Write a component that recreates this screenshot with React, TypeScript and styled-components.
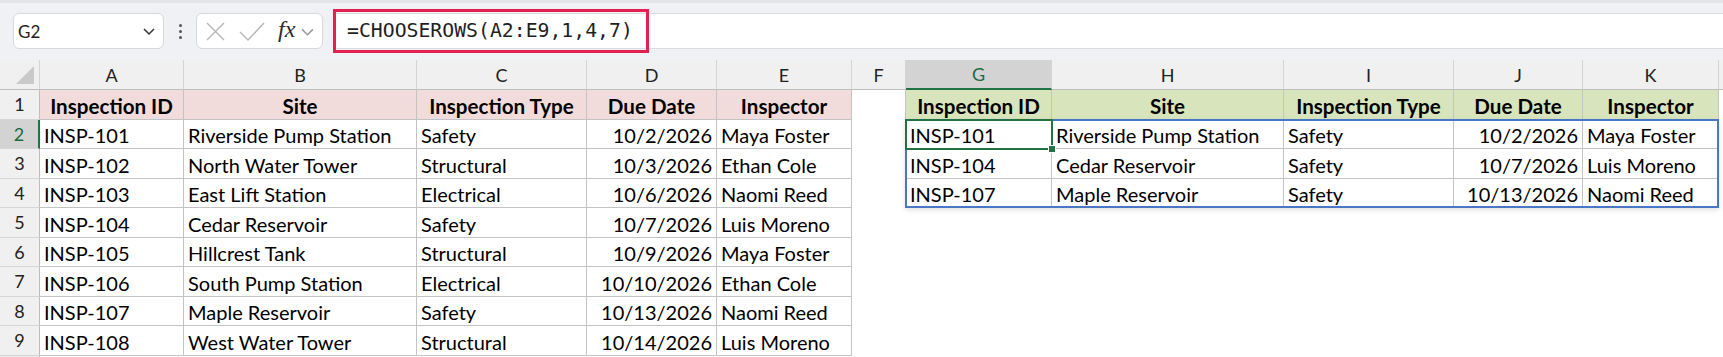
import React from 'react';
import styled, { createGlobalStyle } from 'styled-components';

const GlobalStyle = createGlobalStyle`
  html, body {
    margin: 0;
    padding: 0;
    background: #fff;
  }
  body {
    font-family: Lato, "Liberation Sans", sans-serif;
    overflow: hidden;
  }
`;

// sheet geometry, in px
const COL_WIDTHS = [40, 144, 233, 170, 130, 135, 54, 146, 232, 170, 129, 136];
const LETTERS = ['A', 'B', 'C', 'D', 'E', 'F', 'G', 'H', 'I', 'J', 'K', ''];
const COL_TEMPLATE = COL_WIDTHS.map(w => `${w}px`).join(' ') + ' 1fr';
const ROW_TEMPLATE = '30px repeat(9, 29.5px) 1fr';

const HEADERS = ['Inspection ID', 'Site', 'Inspection Type', 'Due Date', 'Inspector'];

const SOURCE = [
  ['INSP-101', 'Riverside Pump Station', 'Safety', '10/2/2026', 'Maya Foster'],
  ['INSP-102', 'North Water Tower', 'Structural', '10/3/2026', 'Ethan Cole'],
  ['INSP-103', 'East Lift Station', 'Electrical', '10/6/2026', 'Naomi Reed'],
  ['INSP-104', 'Cedar Reservoir', 'Safety', '10/7/2026', 'Luis Moreno'],
  ['INSP-105', 'Hillcrest Tank', 'Structural', '10/9/2026', 'Maya Foster'],
  ['INSP-106', 'South Pump Station', 'Electrical', '10/10/2026', 'Ethan Cole'],
  ['INSP-107', 'Maple Reservoir', 'Safety', '10/13/2026', 'Naomi Reed'],
  ['INSP-108', 'West Water Tower', 'Structural', '10/14/2026', 'Luis Moreno'],
];

const PICKED = [1, 4, 7].map(n => SOURCE[n - 1]);

const Page = styled.div`
  height: 100vh;
  display: flex;
  flex-direction: column;
`;

/* ---------- formula bar ---------- */

const FormulaBar = styled.div`
  height: 60px;
  flex: none;
  box-sizing: border-box;
  display: flex;
  align-items: flex-start;
  padding: 10px 0 0 13px;
  background: #eff1f4;
  border-top: 3px solid #e2e4e8;
`;

const NameBox = styled.div`
  width: 151px;
  height: 36px;
  box-sizing: border-box;
  display: flex;
  align-items: center;
  justify-content: space-between;
  padding: 0 7px 0 4px;
  background: #fff;
  border: 1px solid #d6d8dc;
  border-radius: 6px;
  font-size: 17px;
  color: #1f1f1f;
`;

const Dots = styled.div`
  width: 32px;
  height: 36px;
  display: flex;
  flex-direction: column;
  align-items: center;
  justify-content: center;
  gap: 3px;

  span {
    width: 3px;
    height: 3px;
    border-radius: 50%;
    background: #555;
  }
`;

const FxBox = styled.div`
  width: 127px;
  height: 36px;
  box-sizing: border-box;
  display: flex;
  align-items: center;
  padding-left: 9px;
  background: #fff;
  border: 1px solid #d6d8dc;
  border-radius: 6px;
`;

const FxLabel = styled.span`
  font-family: "Liberation Serif", serif;
  font-style: italic;
  font-size: 24px;
  color: #2b2b2b;
  margin: 0 5px 4px 13px;
`;

const FormulaField = styled.div`
  flex: 1;
  height: 36px;
  box-sizing: border-box;
  margin-left: 10px;
  display: flex;
  align-items: center;
  background: #fff;
  border-top: 1px solid #d9dbde;
  border-bottom: 1px solid #d9dbde;
`;

const Highlight = styled.div`
  width: 316px;
  height: 44px;
  flex: none;
  box-sizing: border-box;
  display: flex;
  align-items: center;
  padding-left: 11px;
  border: 3px solid #e1214f;
  font-family: "DejaVu Sans Mono", "Liberation Mono", monospace;
  font-size: 19.8px;
  color: #1f1f1f;
  margin-top: -1px;
`;

/* ---------- sheet ---------- */

const Sheet = styled.div`
  flex: 1;
  display: grid;
  overflow: hidden;
`;

const Layer = styled.div`
  grid-area: 1 / 1;
  display: grid;
  grid-template-columns: ${COL_TEMPLATE};
  grid-template-rows: ${ROW_TEMPLATE};
  min-height: 0;
`;

const OverlayLayer = styled(Layer)`
  pointer-events: none;
`;

const HeaderCell = styled.div<{ $active?: boolean; $axis: 'col' | 'row' }>`
  box-sizing: border-box;
  display: flex;
  align-items: center;
  justify-content: center;
  background: ${p => (p.$active ? '#d3d3d3' : '#f0f0f0')};
  color: ${p => (p.$active ? '#1d6b3d' : '#222')};
  font-size: 18px;
  overflow: hidden;
  border-right: ${p =>
    p.$axis === 'row'
      ? p.$active ? '2px solid #217346' : '1px solid #bdbdbd'
      : '1px solid #d4d4d4'};
  border-bottom: ${p =>
    p.$axis === 'col'
      ? p.$active ? '2px solid #217346' : '1px solid #bdbdbd'
      : '1px solid #d6d6d6'};
`;

const Corner = styled(HeaderCell)`
  justify-content: flex-end;
  align-items: flex-end;
  padding: 0 5px 5px 0;
`;

const Cell = styled.div<{
  $fill?: string;
  $bold?: boolean;
  $align?: 'left' | 'center' | 'right';
  $right?: boolean;
  $bottom?: boolean;
}>`
  box-sizing: border-box;
  display: flex;
  align-items: flex-end;
  justify-content: ${p =>
    p.$align === 'right' ? 'flex-end' : p.$align === 'center' ? 'center' : 'flex-start'};
  padding: 0 4px 1px 4px;
  background: ${p => p.$fill ?? '#fff'};
  font-size: ${p => (p.$bold ? '20.6px' : '20px')};
  font-weight: ${p => (p.$bold ? 700 : 400)};
  color: #000;
  white-space: nowrap;
  overflow: hidden;
  min-width: 0;
  border-right: 1px solid ${p => (p.$right ? '#c3c3c3' : 'transparent')};
  border-bottom: 1px solid ${p => (p.$bottom ? '#c3c3c3' : 'transparent')};
`;

const Frame = styled.div<{ $col: string; $row: string; $color: string }>`
  grid-column: ${p => p.$col};
  grid-row: ${p => p.$row};
  position: relative;
  border: 2px solid ${p => p.$color};
  margin: -1px 0 0 -1px;
`;

const SpillFrame = styled(Frame)`
  box-shadow: 0 2px 5px rgba(0, 0, 0, 0.12);
`;

const SelectFrame = styled(Frame)`
  margin: -1px -1px -1px -1px;

  &::after {
    content: '';
    position: absolute;
    right: -5px;
    bottom: -5px;
    width: 6px;
    height: 6px;
    background: #217346;
    border: 1px solid #fff;
  }
`;

const Chevron = ({ color, size = 14 }: { color: string; size?: number }) => (
  <svg width={size} height={size} viewBox="0 0 14 14">
    <polyline points="2,5 7,10 12,5" fill="none" stroke={color} strokeWidth="1.5" />
  </svg>
);

function formulaBar() {
  return (
    <FormulaBar>
      <NameBox>
        <span>G2</span>
        <Chevron color="#333" />
      </NameBox>
      <Dots>
        <span />
        <span />
        <span />
      </Dots>
      <FxBox>
        <svg width="19" height="19" viewBox="0 0 19 19">
          <path d="M1 1 L18 18 M18 1 L1 18" stroke="#b5b5b5" strokeWidth="1.4" fill="none" />
        </svg>
        <svg width="26" height="19" viewBox="0 0 26 19" style={{ marginLeft: 14 }}>
          <polyline points="1,10 9,18 25,1" stroke="#b5b5b5" strokeWidth="1.4" fill="none" />
        </svg>
        <FxLabel>fx</FxLabel>
        <Chevron color="#9a9a9a" size={15} />
      </FxBox>
      <FormulaField>
        <Highlight>=CHOOSEROWS(A2:E9,1,4,7)</Highlight>
      </FormulaField>
    </FormulaBar>
  );
}

function sheetCell(row: number, col: number) {
  // row is the sheet row (1..10), col is 0 for A .. 11 for L
  const key = `${row}-${col}`;
  if (col <= 4 && row <= 9) {
    const head = row === 1;
    const text = head ? HEADERS[col] : SOURCE[row - 2][col];
    return (
      <Cell
        key={key}
        $fill={head ? '#f2dcdb' : undefined}
        $bold={head}
        $align={head ? 'center' : col === 3 ? 'right' : 'left'}
        $right
        $bottom
      >
        {text}
      </Cell>
    );
  }
  if (col >= 6 && col <= 10 && row <= 4) {
    const c = col - 6;
    const head = row === 1;
    const text = head ? HEADERS[c] : PICKED[row - 2][c];
    return (
      <Cell
        key={key}
        $fill={head ? '#d8e4bc' : undefined}
        $bold={head}
        $align={head ? 'center' : c === 3 ? 'right' : 'left'}
        $right
        $bottom
      >
        {text}
      </Cell>
    );
  }
  return <Cell key={key} $right={col === 5 && row <= 4} />;
}

export default function App() {
  const cells: React.ReactNode[] = [];
  cells.push(
    <Corner key="corner" $axis="col">
      <svg width="18" height="18" viewBox="0 0 18 18">
        <polygon points="18,0 18,18 0,18" fill="#c9c9c9" />
      </svg>
    </Corner>
  );
  LETTERS.forEach((l, i) =>
    cells.push(
      <HeaderCell key={`h-${i}`} $axis="col" $active={i === 6}>
        {l}
      </HeaderCell>
    )
  );
  for (let r = 1; r <= 10; r++) {
    // row 10 is only a sliver at the bottom edge, its number is not visible
    cells.push(
      <HeaderCell key={`r-${r}`} $axis="row" $active={r === 2}>
        {r < 10 ? r : ''}
      </HeaderCell>
    );
    for (let c = 0; c < 12; c++) cells.push(sheetCell(r, c));
  }

  return (
    <Page>
      <GlobalStyle />
      {formulaBar()}
      <Sheet>
        <Layer>{cells}</Layer>
        <OverlayLayer>
          <SpillFrame $col="8 / 13" $row="3 / 6" $color="#4a76c6" />
          <SelectFrame $col="8 / 9" $row="3 / 4" $color="#217346" />
        </OverlayLayer>
      </Sheet>
    </Page>
  );
}
